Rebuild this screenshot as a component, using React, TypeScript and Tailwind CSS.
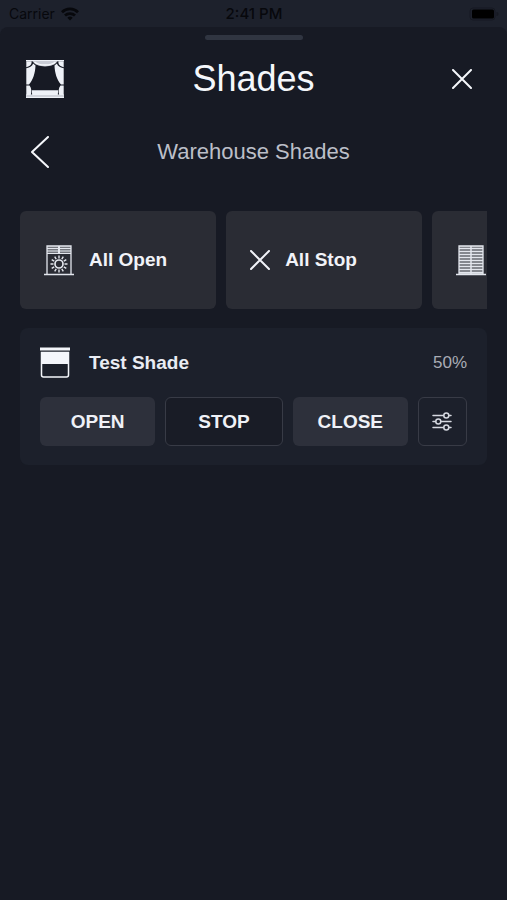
import type { ReactNode } from 'react';

interface Scene {
  name: string;
  icon: ReactNode;
  // scenes past the fold only show their icon
  iconOnly?: boolean;
}

function CurtainsIcon() {
  return (
    <svg viewBox="0 0 38 38" className="h-[38px] w-[38px]" fill="#eef1f7" aria-hidden="true">
      <path d="M0 0h38v1.300H0z" />
      <path d="M6.500 1h25c-2 3.800-6.800 5.400-12.500 5.400S8.500 4.800 6.500 1z" fill="#c9ccd5" />
      <path d="M8.500 2c2.500 2 6 3 10.500 3s8-1 10.500-3" fill="none" stroke="#f6f8fc" strokeWidth="1.400" />
      <path d="M.3 1.300h5.200c.6 3-1.300 5-5.200 5.900zM37.700 1.300h-5.200c-.6 3 1.300 5 5.200 5.900z" />
      <path d="M.3 8.200c3.900-.8 6-2.300 6.800-4.700L9.500 5.500C9.300 13 7 20 3 24.500H.3zM37.700 8.200c-3.900-.8-6-2.300-6.800-4.700L28.500 5.500C28.700 13 31 20 35 24.500h2.700z" />
      <path d="M.3 25.500h3.200c2 2.600 2.300 6 1.300 9.500H.3zM37.700 25.500h-3.200c-2 2.600-2.300 6-1.300 9.500h4.500z" />
      <path d="M5.800 30.300h26.400l-.4 4.700H6.200z" />
      <path d="M0 34.500h38V38H0z" />
      <path d="M0 36h38" stroke="#8b8f9a" strokeWidth=".6" />
    </svg>
  );
}

function CloseIcon({ className }: { className: string }) {
  return (
    <svg viewBox="0 0 20 20" className={className} fill="none" stroke="currentColor" strokeWidth="2" strokeLinecap="round" aria-hidden="true">
      <path d="M1 1l18 18M19 1L1 19" />
    </svg>
  );
}

function BlindOpenIcon() {
  return (
    <svg viewBox="0 0 30 31" className="h-[31px] w-[30px]" fill="none" stroke="#e3e6ed" aria-hidden="true">
      <path d="M3 1h24v8H3z" fill="#73767d" stroke="none" />
      <path d="M3 29V1h24v28" strokeWidth="1.300" />
      <path d="M0 29.500h30" strokeWidth="1.500" />
      <path d="M3 3.500h24M3 6h24M3 8.500h24" strokeWidth="1" />
      <path d="M15 1v8" strokeWidth="2" />
      <circle cx="15" cy="19" r="4" strokeWidth="1.700" />
      <path
        d="M15 13.500v-3M15 24.500v3M9.500 19h-3M20.500 19h3M12.200 14.200l-1.500-2.500M17.800 14.200l1.500-2.500M12.200 23.800l-1.500 2.500M17.800 23.800l1.500 2.500M10.200 16.200l-2.500-1.500M19.800 16.200l2.500-1.500M10.200 21.800l-2.500 1.500M19.800 21.800l2.500 1.500"
        strokeWidth="1.400"
      />
    </svg>
  );
}

function BlindClosedIcon() {
  return (
    <svg viewBox="0 0 30 31" className="h-[31px] w-[30px]" fill="none" stroke="#e3e6ed" aria-hidden="true">
      <path d="M3 1h24v28H3z" fill="#85888f" strokeWidth="1.300" />
      <path d="M3 3.500h24M3 6.500h24M3 9.500h24M3 12.500h24M3 15.500h24M3 18.500h24M3 21.500h24M3 24.500h24M3 27.500h24" strokeWidth="1" />
      <path d="M15 1v28" strokeWidth="1.500" />
      <path d="M0 29.500h30" strokeWidth="1.500" />
    </svg>
  );
}

function ShadeIcon() {
  return (
    <svg viewBox="0 0 30 31" className="h-[31px] w-[30px]" fill="none" stroke="#f4f6fb" aria-hidden="true">
      <path d="M0 2h30" strokeWidth="3" />
      <path d="M1.500 5.500h27V28a2 2 0 0 1-2 2h-23a2 2 0 0 1-2-2z" strokeWidth="1.500" />
      <path d="M1 5h28v12H1z" fill="#f4f6fb" stroke="none" />
    </svg>
  );
}

function SlidersIcon() {
  return (
    <svg viewBox="0 0 20 19" className="h-[19px] w-5" fill="none" stroke="#d5d8e0" strokeWidth="1.500" strokeLinecap="round" aria-hidden="true">
      <path d="M1 3.500h10.500M17 3.500h2M1 9.500h2.500M9 9.500h10M1 15.500h10.500M17 15.500h2" />
      <circle cx="14.300" cy="3.500" r="2.500" />
      <circle cx="6.300" cy="9.500" r="2.500" />
      <circle cx="14.300" cy="15.500" r="2.500" />
    </svg>
  );
}

function StatusBar() {
  return (
    <div className="grid h-[27px] grid-cols-3 items-center pl-[9px] pr-2 font-['Inter',sans-serif] text-sm leading-5 text-[#07080c]">
      <div className="flex items-center gap-[6px]">
        <span>Carrier</span>
        <svg viewBox="0 0 18 14" className="h-[14px] w-[18px]" fill="none" stroke="currentColor" strokeWidth="2.800" aria-hidden="true">
          <path d="M1 5.200a11.500 11.500 0 0 1 16 0M4 8.600a7.200 7.200 0 0 1 10 0" />
          <path d="M9 13.500L6.300 10.800a3.900 3.900 0 0 1 5.400 0z" fill="currentColor" stroke="none" />
        </svg>
      </div>
      <span className="text-center text-[15px] font-medium">2:41 PM</span>
      <svg viewBox="0 0 30 14" className="h-[14px] w-[30px] justify-self-end" aria-hidden="true">
        <rect x="1" y="1" width="25" height="12" rx="3" fill="none" stroke="#161922" />
        <rect x="3" y="2.500" width="22" height="9" rx="1.500" fill="#000" />
        <path d="M27.500 5v4a2 2 0 0 0 0-4z" fill="#161922" />
      </svg>
    </div>
  );
}

const SCENES: Scene[] = [
  { name: 'All Open', icon: <BlindOpenIcon /> },
  { name: 'All Stop', icon: <CloseIcon className="h-5 w-5" /> },
  { name: 'All Close', icon: <BlindClosedIcon />, iconOnly: true },
];

function SceneRow({ scenes }: { scenes: Scene[] }) {
  return (
    <div className="flex gap-[10px] overflow-hidden">
      {scenes.map((scene) => (
        <button
          key={scene.name}
          aria-label={scene.name}
          className="flex h-[98px] w-[42%] shrink-0 items-center gap-[15px] rounded-md bg-[#2a2c34] pl-6 text-[19px] leading-6 font-bold text-[#f1f3f8]"
        >
          {scene.icon}
          {!scene.iconOnly && scene.name}
        </button>
      ))}
    </div>
  );
}

function ShadeCard({ name, position }: { name: string; position: number }) {
  return (
    <section className="rounded-lg bg-[#1c202b] px-5 py-[19px]">
      <div className="flex items-center gap-[19px]">
        <ShadeIcon />
        <h3 className="flex-1 text-[19px] leading-6 font-bold text-[#e9ecf3]">{name}</h3>
        <span className="text-[17px] leading-6 text-[#a9acb5]">{position}%</span>
      </div>
      <div className="mt-[19px] flex gap-[10px] text-[19px] leading-6 font-bold text-[#eff1f7]">
        <button className="h-[49px] flex-1 rounded-md bg-[#2d303b]">OPEN</button>
        <button className="h-[49px] flex-1 rounded-md border border-[#383b46] bg-[#191c26]">STOP</button>
        <button className="h-[49px] flex-1 rounded-md bg-[#2d303b]">CLOSE</button>
        <button
          aria-label="Adjust position"
          className="flex h-[49px] w-[49px] items-center justify-center rounded-md border border-[#383b46]"
        >
          <SlidersIcon />
        </button>
      </div>
    </section>
  );
}

export default function App() {
  return (
    <div className="flex min-h-screen flex-col bg-[#1d212c] font-['Liberation_Sans',Arial,sans-serif]">
      <StatusBar />
      <main className="flex-1 rounded-t-lg bg-[#171a24] px-5 pt-2">
        <div className="mx-auto h-[5px] w-[98px] rounded-full bg-[#303541]" />

        <header className="mt-[17px] flex h-11 items-center justify-between px-[6px]">
          <CurtainsIcon />
          <h1 className="text-4xl leading-10 text-[#f5f7fb]">Shades</h1>
          <button aria-label="Close" className="flex w-[38px] justify-center text-[#f5f7fb]">
            <CloseIcon className="h-5 w-5" />
          </button>
        </header>

        <div className="mt-[29px] grid h-11 grid-cols-[40px_1fr_40px] items-center">
          <button aria-label="Back" className="pl-[11px] text-[#f5f7fb]">
            <svg viewBox="0 0 18 32" className="h-8 w-[18px]" fill="none" stroke="currentColor" strokeWidth="2" strokeLinecap="round" strokeLinejoin="round" aria-hidden="true">
              <path d="M17 1L1 16l16 15" />
            </svg>
          </button>
          <h2 className="text-center text-[22px] leading-7 text-[#bcbfc8]">Warehouse Shades</h2>
        </div>

        <div className="mt-[37px] flex flex-col gap-[19px]">
          <SceneRow scenes={SCENES} />
          <ShadeCard name="Test Shade" position={50} />
        </div>
      </main>
    </div>
  );
}
